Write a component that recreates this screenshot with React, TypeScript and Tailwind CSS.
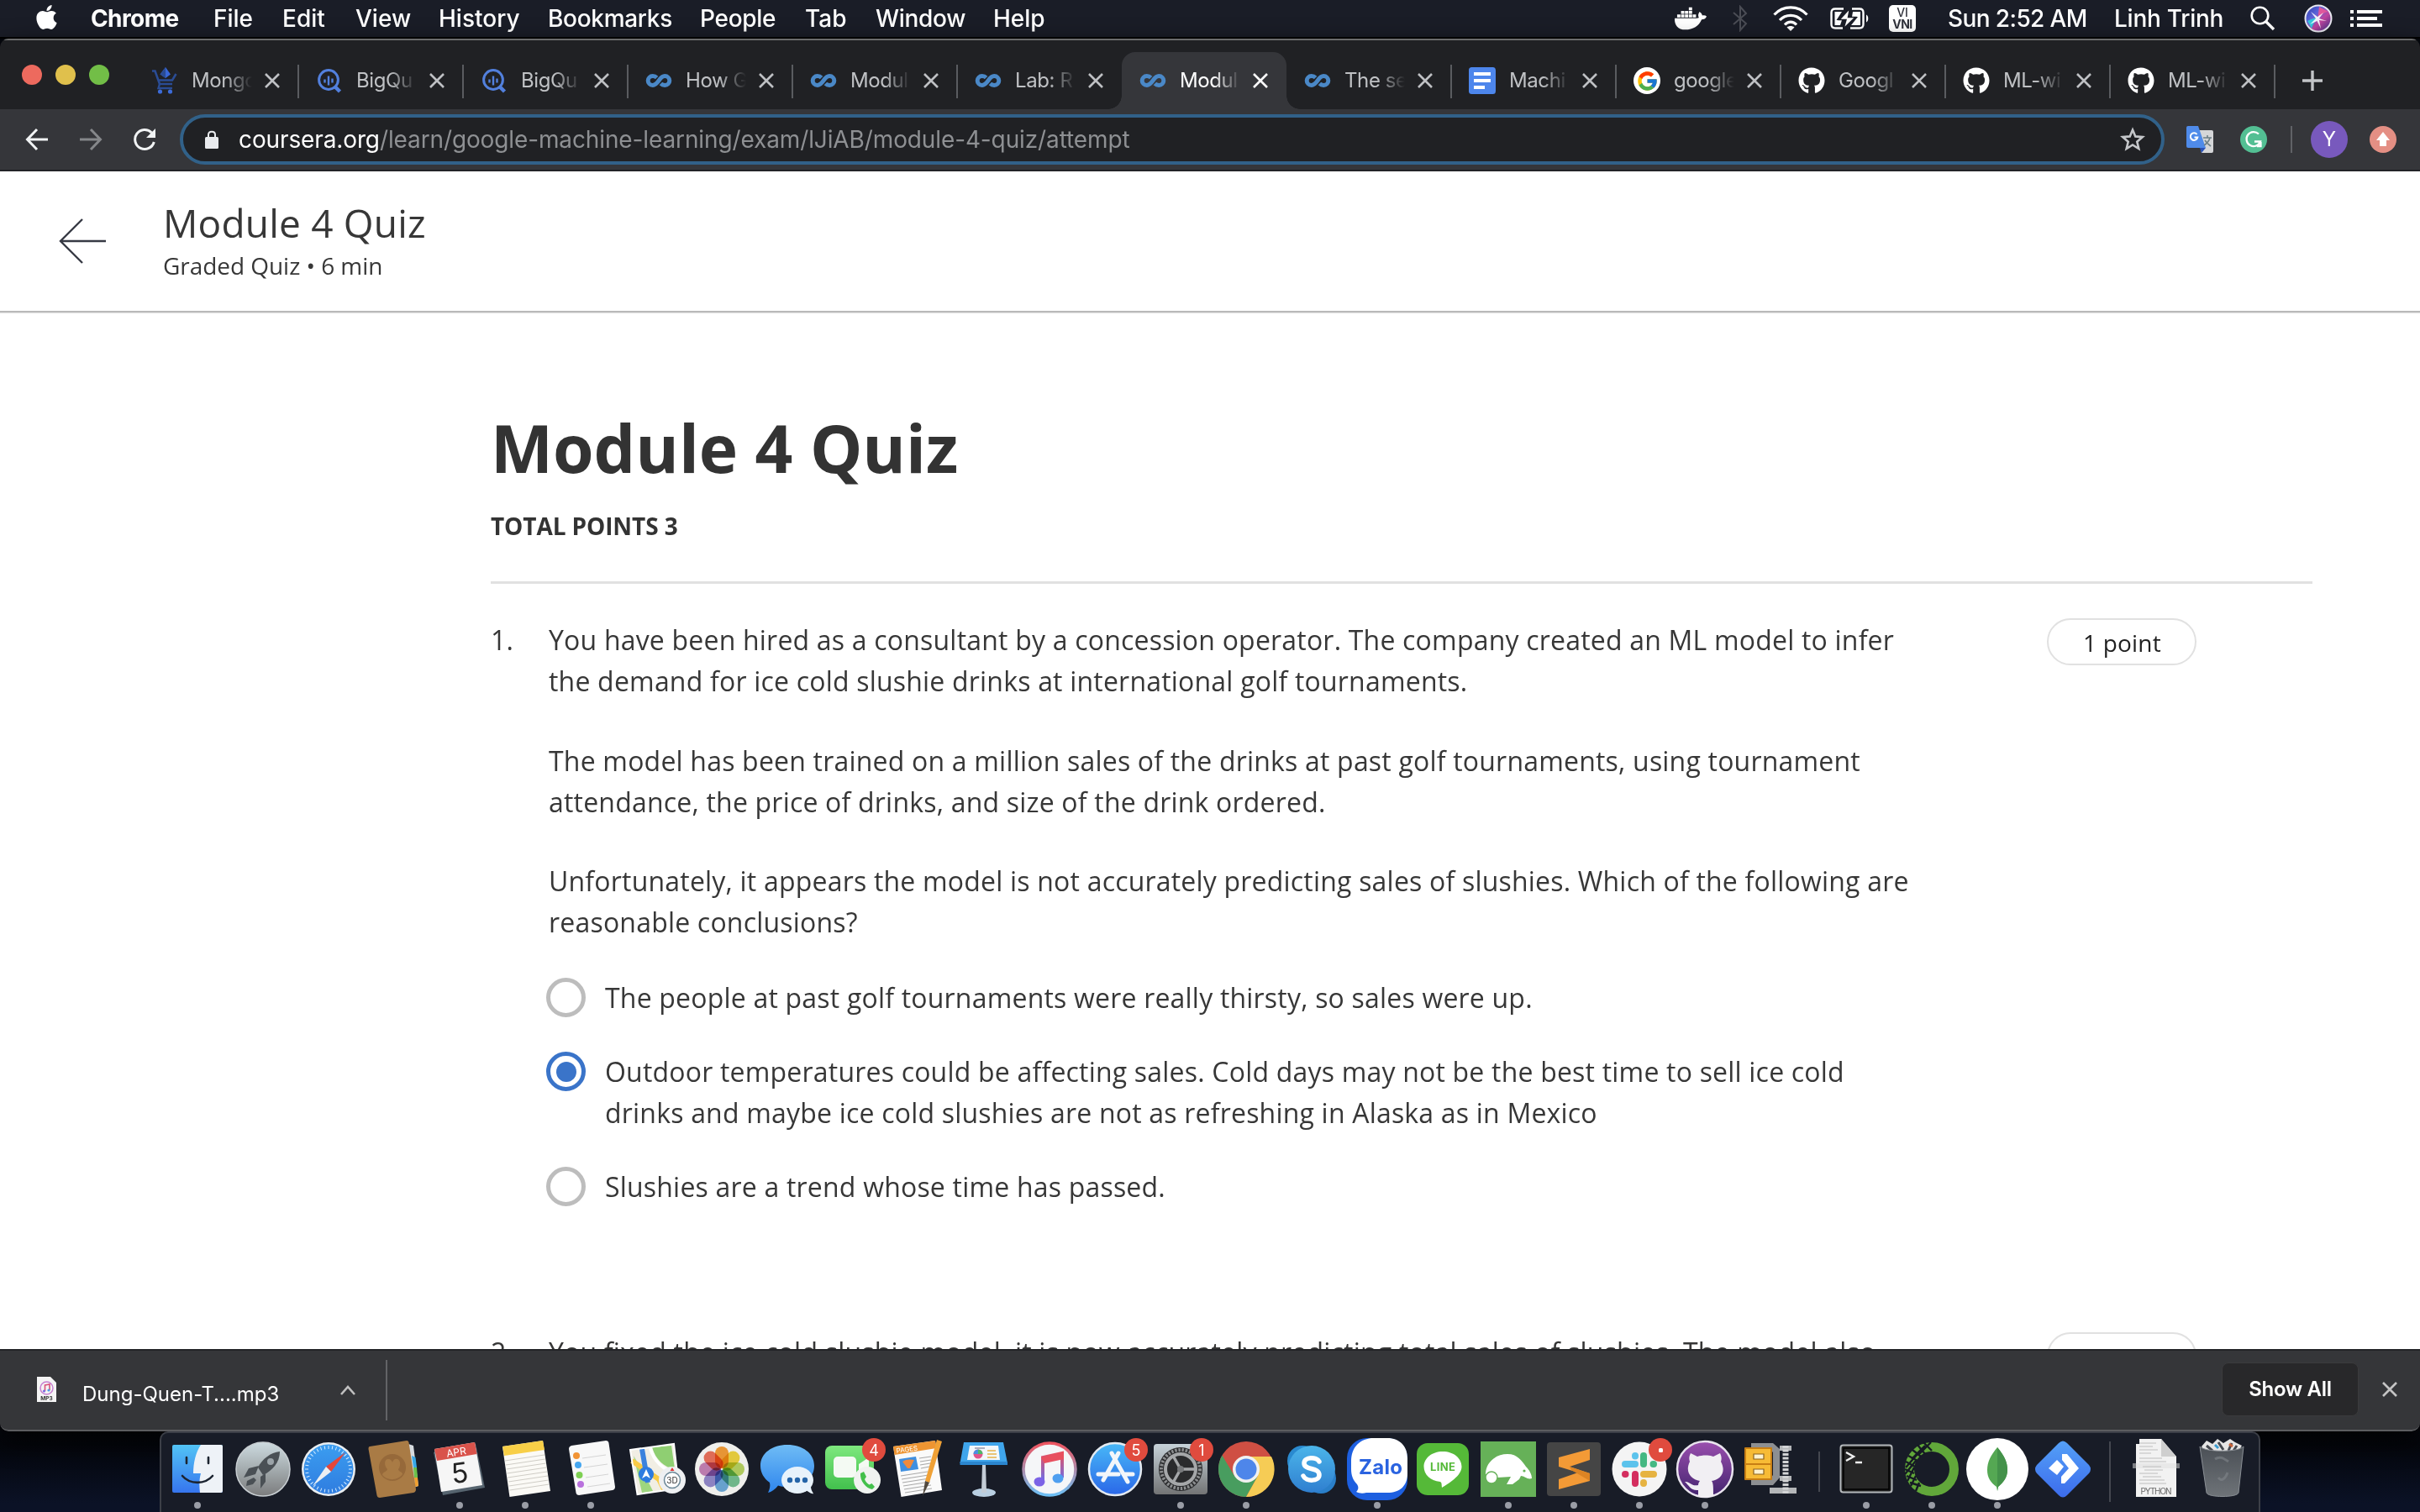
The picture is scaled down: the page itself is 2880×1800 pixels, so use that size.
import React from "react";
import { FaApple, FaDocker, FaGithub } from "react-icons/fa";
import { FcGoogle } from "react-icons/fc";

const sans = "font-['Inter','Liberation_Sans',sans-serif]";

function Coursera() {
  return (
    <svg viewBox="0 0 32 32" className="h-8 w-8" fill="none">
      <path
        d="M13.600 12.400C12.200 11 10.600 10.600 8.800 10.600C5.600 10.600 3.200 13 3.200 16S5.600 21.400 8.800 21.400C15.500 21.400 16.500 10.600 23.200 10.600C26.400 10.600 28.800 13 28.800 16S26.400 21.400 23.200 21.400C21.400 21.400 19.800 21 18.400 19.600"
        stroke="#4a88c7"
        strokeWidth="5"
      />
    </svg>
  );
}

function Cart() {
  return (
    <svg viewBox="0 0 32 32" className="h-8 w-8" fill="none">
      <path d="M1 4.5H4.5L10 20H25M9 15.5H25L29.5 8" stroke="#2a4c94" strokeWidth="2.6" />
      <path d="M10 20L8.5 25H25" stroke="#2a4c94" strokeWidth="2.4" />
      <path d="M17 0L23 8.5L17 13L10.500 8.500Z" fill="#3867d6" />
      <path d="M17 0V13L10.500 8.500Z" fill="#2a4c94" />
      <circle cx="10.500" cy="29" r="2.600" fill="#3c6bd8" />
      <circle cx="22.500" cy="29" r="2.600" fill="#3c6bd8" />
    </svg>
  );
}

function BigQuery() {
  return (
    <svg viewBox="0 0 32 32" className="h-8 w-8" fill="none">
      <circle cx="15" cy="15" r="11.400" stroke="#5280dd" strokeWidth="3" />
      <path d="M23 23.500L28.500 29" stroke="#5280dd" strokeWidth="4.500" />
      <path d="M10.500 14.500V18.500M15 10.500V21.500M19.500 13.500V18.500" stroke="#5280dd" strokeWidth="2.400" />
    </svg>
  );
}

function Docs() {
  return (
    <svg viewBox="0 0 32 32" className="h-8 w-8">
      <rect width="32" height="32" rx="3.500" fill="#4d86ec" />
      <path d="M6 6h20v4H6zM6 14h20v4H6zM6 22h13v4H6z" fill="#fff" />
    </svg>
  );
}

function GoogleIcon() {
  return (
    <span className="flex h-8 w-8 items-center justify-center rounded-full bg-white">
      <FcGoogle className="h-[27px] w-[27px]" />
    </span>
  );
}

const gh = <FaGithub className="h-8 w-8 text-white" />;

const tabs: { icon: React.ReactNode; title: string; active?: boolean; sep: boolean }[] = [
  { icon: <Cart />, title: "Mongo", sep: true },
  { icon: <BigQuery />, title: "BigQu", sep: true },
  { icon: <BigQuery />, title: "BigQu", sep: true },
  { icon: <Coursera />, title: "How G", sep: true },
  { icon: <Coursera />, title: "Modul", sep: true },
  { icon: <Coursera />, title: "Lab: R", sep: false },
  { icon: <Coursera />, title: "Modul", active: true, sep: false },
  { icon: <Coursera />, title: "The se", sep: true },
  { icon: <Docs />, title: "Machi", sep: true },
  { icon: <GoogleIcon />, title: "google", sep: true },
  { icon: gh, title: "Googl", sep: true },
  { icon: gh, title: "ML-wi", sep: true },
  { icon: gh, title: "ML-wi", sep: true },
];

const menus = [
  { t: "File", w: "w-[82px] tracking-[0px]" },
  { t: "Edit", w: "w-[87px]" },
  { t: "View", w: "w-[99px]" },
  { t: "History", w: "w-[130px]" },
  { t: "Bookmarks", w: "w-[181px] tracking-[-0.3px]" },
  { t: "People", w: "w-[125px] tracking-[-0.3px]" },
  { t: "Tab", w: "w-[84px]" },
  { t: "Window", w: "w-[140px] tracking-[-0.3px]" },
  { t: "Help", w: "w-[80px]" },
];

function MenuBar() {
  return (
    <div className={`${sans} flex h-[46px] shrink-0 items-center border-b-2 border-black bg-[#1a1d27] text-[28px] leading-[44px] font-medium text-white`}>
      <FaApple className="ml-[41px] h-[33px] w-[29px] -translate-y-[2px]" />
      <div className="ml-[38px] w-[146px] font-bold tracking-[-0.6px]">Chrome</div>
      {menus.map((m) => (
        <div key={m.t} className={`${m.w} whitespace-nowrap`}>{m.t}</div>
      ))}
      <FaDocker className="ml-[731px] h-[38px] w-[38px]" />
      <svg viewBox="0 0 20 32" className="ml-[30px] h-8 w-5" fill="none" stroke="#4b4d55" strokeWidth="2">
        <path d="M2 9L17 22L10 30V2L17 10L2 23" />
      </svg>
      <svg viewBox="0 0 42 30" className="ml-[29px] h-[30px] w-[42px]" fill="none" stroke="#fff" strokeWidth="3.200">
        <path d="M1.500 10.500C12 -1 30 -1 40.500 10.500M8 17C15 9.500 27 9.500 34 17M14 22.500C18 18 24 18 28 22.500" />
        <path d="M16.500 25.500L21 30L25.500 25.500C23 23.500 19 23.500 16.500 25.500Z" fill="#fff" stroke="none" />
      </svg>
      <svg viewBox="0 0 46 26" className="ml-[26px] h-[26px] w-[46px]" fill="none" stroke="#fff" strokeWidth="2.400">
        <path d="M16 1.500H6C3 1.500 1.500 3 1.500 6V20C1.500 23 3 24.500 6 24.500H15M26 1.500H35C38 1.500 39.500 3 39.500 6V20C39.500 23 38 24.500 35 24.500H24" />
        <path d="M43 8.500C46 10 46 16 43 17.500Z" fill="#fff" stroke="none" />
        <path d="M14 5H5.500V21H12L14 15H7.500ZM27 5H36V21H25L33 11H26Z" fill="#fff" stroke="none" />
        <path d="M23.500 1L11 14.500H19L16 25L30 11.500H21.500Z" fill="#fff" stroke="#1a1d27" strokeWidth="1.500" />
      </svg>
      <div className="ml-[24px] flex h-8 w-8 flex-col items-center justify-center rounded-[5px] bg-white text-[14px] leading-[14px] text-[#30323b]">
        <span>VI</span>
        <span className="font-bold tracking-[-0.5px]">VNI</span>
      </div>
      <div className="ml-[38px] w-[198px] tracking-[-0.6px] whitespace-nowrap">Sun 2:52 AM</div>
      <div className="w-[162px] tracking-[-0.25px] whitespace-nowrap">Linh Trinh</div>
      <svg viewBox="0 0 30 30" className="h-[30px] w-[30px]" fill="none" stroke="#fff" strokeWidth="2.600">
        <circle cx="11.500" cy="11.500" r="9.800" />
        <path d="M18.500 18.500L28 28" strokeWidth="3.400" />
      </svg>
      <svg viewBox="0 0 34 34" className="ml-[34px] h-[34px] w-[34px]">
        <defs>
          <linearGradient id="siri" x1="0" y1="0" x2="1" y2="1">
            <stop offset="0" stopColor="#2a3aa8" />
            <stop offset=".35" stopColor="#5a64d8" />
            <stop offset=".6" stopColor="#c0449c" />
            <stop offset="1" stopColor="#2b2f86" />
          </linearGradient>
        </defs>
        <circle cx="17" cy="17" r="15.500" fill="url(#siri)" stroke="#e8e8f0" strokeWidth="2" />
        <path d="M4 20C10 17 13 16 16 16C13 20 10 25 9 29Z" fill="#35c7dd" />
        <path d="M18 3C17 9 17 13 17 16C21 12 25 9 29 9Z" fill="#e0579c" />
        <path d="M8 9L16 15L23 10L18 17L27 20L18 19L20 29L15.500 20L7 24L14 17Z" fill="#fff" opacity=".9" />
      </svg>
      <svg viewBox="0 0 38 20" className="ml-[21px] h-5 w-[38px]" fill="#fff">
        <path d="M0 0h4v4H0zM8 0h30v4H8zM0 8h4v4H0zM8 8h24v4H8zM0 16h4v4H0zM8 16h30v4H8z" />
      </svg>
    </div>
  );
}

function Close({ className }: { className: string }) {
  return (
    <svg viewBox="0 0 20 20" className={className} fill="none" stroke="currentColor" strokeWidth="2.600">
      <path d="M2 2L18 18M18 2L2 18" />
    </svg>
  );
}

function TabStrip() {
  return (
    <div className="flex h-[82px] items-end pl-[26px]">
      <div className="mr-[29px] mb-[29px] flex gap-4">
        <span className="h-6 w-6 rounded-full bg-[#ed6a5e]" />
        <span className="h-6 w-6 rounded-full bg-[#e0c04c]" />
        <span className="h-6 w-6 rounded-full bg-[#72be47]" />
      </div>
      {tabs.map((t, i) => (
        <div
          key={i}
          className={
            t.active
              ? "relative flex h-[68px] w-[196px] items-center rounded-t-[16px] bg-[#35363a] pl-[21px] text-white"
              : "relative flex h-[68px] w-[196px] items-center pl-[21px] text-[#bfc1c4]"
          }
        >
          {t.active && (
            <>
              <span className="absolute bottom-0 -left-4 h-4 w-4 bg-[radial-gradient(circle_at_0_0,transparent_15.5px,#35363a_16px)]" />
              <span className="absolute -right-4 bottom-0 h-4 w-4 bg-[radial-gradient(circle_at_100%_0,transparent_15.5px,#35363a_16px)]" />
            </>
          )}
          {t.icon}
          <span className="ml-4 w-[72px] overflow-hidden text-[24px] leading-8 tracking-[-0.4px] whitespace-nowrap [mask-image:linear-gradient(to_right,#000_40px,transparent_72px)]">
            {t.title}
          </span>
          <Close className="ml-[14px] h-5 w-5" />
          {t.sep && <span className="absolute top-[15px] right-[-1px] h-10 w-[2px] bg-[#5a5c60]" />}
        </div>
      ))}
      <svg viewBox="0 0 26 26" className="mb-[21px] ml-[32px] h-[26px] w-[26px]" stroke="#c3c5c8" strokeWidth="3.400">
        <path d="M13 1V25M1 13H25" />
      </svg>
    </div>
  );
}

function Toolbar() {
  return (
    <div className="flex h-[74px] items-center border-b-2 border-[#222327] bg-[#35363a] pl-[30px]">
      <svg viewBox="0 0 28 28" className="h-7 w-7" fill="none" stroke="#f1f3f4" strokeWidth="3">
        <path d="M14 2L2.500 14L14 26M2.500 14H27" />
      </svg>
      <svg viewBox="0 0 28 28" className="ml-[36px] h-7 w-7" fill="none" stroke="#85878a" strokeWidth="3">
        <path d="M14 2L25.500 14L14 26M25.500 14H1" />
      </svg>
      <svg viewBox="0 0 28 28" className="ml-[36px] h-7 w-7" fill="none" stroke="#f1f3f4" strokeWidth="3">
        <path d="M22.500 6A11.500 11.500 0 1 0 25.300 17" />
        <path d="M27 1V12H16Z" fill="#f1f3f4" stroke="none" />
      </svg>
      <div className="ml-[28px] flex h-[60px] w-[2362px] items-center rounded-full border-4 border-[#316189] bg-[#202124] pl-[26px]">
        <svg viewBox="0 0 16 22" className="h-[22px] w-4">
          <rect y="8" width="16" height="14" rx="1.500" fill="#e8eaed" />
          <path d="M4 9V5.500C4 0.500 12 0.500 12 5.500V9" fill="none" stroke="#e8eaed" strokeWidth="2" />
        </svg>
        <div className="ml-6 text-[28px] leading-10 tracking-[-0.12px] whitespace-nowrap text-[#8e9093]">
          <span className="text-white">coursera.org</span>/learn/google-machine-learning/exam/lJiAB/module-4-quiz/attempt
        </div>
        <svg viewBox="0 0 30 30" className="mr-[19px] ml-auto h-[30px] w-[30px]" fill="none" stroke="#c4c6c9" strokeWidth="2.600">
          <path d="M15 3.500L18.300 11.400L26.800 12.100L20.300 17.700L22.300 26L15 21.500L7.700 26L9.700 17.700L3.200 12.100L11.700 11.400Z" />
        </svg>
      </div>
      <svg viewBox="0 0 32 32" className="ml-[26px] h-8 w-8">
        <path d="M12 5H30Q32 5 32 7V30Q32 32 30 32H18Z" fill="#d5d6d8" />
        <path d="M16 26H23L18 32Z" fill="#2a52b8" />
        <path d="M2 0H14L23 26H2Q0 26 0 24V2Q0 0 2 0Z" fill="#4f8bea" />
        <path d="M20 14H30M25 11V14M28 14C27 18 24 21 21 23M22 17C24 20 26 22 29 24" stroke="#6d7f86" strokeWidth="1.600" fill="none" />
        <path d="M12.500 10A4.300 4.300 0 1 0 13.300 13.500H9.500" fill="none" stroke="#fff" strokeWidth="2" />
      </svg>
      <svg viewBox="0 0 32 32" className="ml-8 h-8 w-8">
        <circle cx="16" cy="16" r="16" fill="#53bf93" />
        <path d="M22 9.500A8.500 8.500 0 1 0 24 18.500H17M20 24H24.500V19" fill="none" stroke="#fff" strokeWidth="2.300" />
      </svg>
      <span className="ml-[28px] h-8 w-[2px] bg-[#606266]" />
      <span className="ml-[22px] flex h-11 w-11 items-center justify-center rounded-full bg-[#7859bd] text-[24px] text-white">Y</span>
      <svg viewBox="0 0 32 32" className="ml-[26px] h-8 w-8">
        <circle cx="16" cy="16" r="16" fill="#e48f84" />
        <path d="M16 7L24 17H20V24H12V17H8Z" fill="#fff" />
      </svg>
    </div>
  );
}

function Radio({ on }: { on?: boolean }) {
  return on ? (
    <span className="mt-px flex h-[47px] w-[47px] shrink-0 items-center justify-center rounded-full border-[5px] border-[#3a74c9]">
      <span className="h-6 w-6 rounded-full bg-[#3a74c9]" />
    </span>
  ) : (
    <span className="mt-px h-[47px] w-[47px] shrink-0 rounded-full border-[5px] border-[#bdbdbd]" />
  );
}

function Points() {
  return (
    <div className="flex h-[56px] w-[178px] items-center justify-center rounded-full border-2 border-[#e1e1e1] pt-[3px] pl-px text-[28px] text-[#1f1f1f]">
      1 point
    </div>
  );
}

function Page() {
  return (
    <div className="flex h-[1402px] flex-col overflow-hidden bg-white font-['Open_Sans','Noto_Sans',sans-serif] text-[#373737]">
      <header className="flex h-[168px] shrink-0 border-b-[2px] border-[#b9b9b9] shadow-[0_1px_1px_#e4e4e4]">
        <svg viewBox="0 0 56 54" className="mt-[56px] ml-[70px] h-[54px] w-14" fill="none" stroke="#373a44" strokeWidth="2.400">
          <path d="M28 1L2 27L28 53M2 27H56" />
        </svg>
        <div className="ml-[68px]">
          <div className="mt-[29px] text-[46px] leading-[64px] tracking-[0.2px]">Module 4 Quiz</div>
          <div className="text-[28px] leading-[38px] tracking-[-0.05px]">Graded Quiz • 6 min</div>
        </div>
      </header>
      <main className="ml-[584px] w-[2168px]">
        <h1 className="mt-[106px] text-[78.5px] leading-[110px] font-bold text-[#333]">Module 4 Quiz</h1>
        <div className="mt-[20px] text-[28px] leading-9 font-bold tracking-[-0.1px] text-[#333]">TOTAL POINTS 3</div>
        <div className="mt-[48px] h-[3px] bg-[#e1e1e1]" />
        <section className="mt-[41px] flex h-[850px] text-[32px] leading-[49px] tracking-[0.2px]">
          <div className="w-[69px] pt-px">1.</div>
          <div className="w-[1783px] pt-px">
            <p className="whitespace-nowrap">
              You have been hired as a consultant by a concession operator. The company created an ML model to infer
              <br />
              the demand for ice cold slushie drinks at international golf tournaments.
            </p>
            <p className="mt-[46px] whitespace-nowrap">
              The model has been trained on a million sales of the drinks at past golf tournaments, using tournament
              <br />
              attendance, the price of drinks, and size of the drink ordered.
            </p>
            <p className="mt-[45px] whitespace-nowrap">
              Unfortunately, it appears the model is not accurately predicting sales of slushies. Which of the following are
              <br />
              reasonable conclusions?
            </p>
            <div className="mt-[41px] -ml-[3px] flex flex-col gap-[39px]">
              <div className="flex gap-[23px]">
                <Radio />
                <p>The people at past golf tournaments were really thirsty, so sales were up.</p>
              </div>
              <div className="flex gap-[23px]">
                <Radio on />
                <p className="whitespace-nowrap">
                  Outdoor temperatures could be affecting sales. Cold days may not be the best time to sell ice cold
                  <br />
                  drinks and maybe ice cold slushies are not as refreshing in Alaska as in Mexico
                </p>
              </div>
              <div className="flex gap-[23px]">
                <Radio />
                <p>Slushies are a trend whose time has passed.</p>
              </div>
            </div>
          </div>
          <Points />
        </section>
        <section className="flex text-[32px] leading-[48px] tracking-[0.2px]">
          <div className="w-[69px]">2.</div>
          <div className="w-[1783px] whitespace-nowrap">
            You fixed the ice cold slushie model, it is now accurately predicting total sales of slushies. The model also
          </div>
          <Points />
        </section>
      </main>
    </div>
  );
}

function Downloads() {
  return (
    <div className="flex h-[98px] items-center rounded-b-[10px] border-t-2 border-b-2 border-t-[#232427] border-b-[#5c5d60] bg-[#353639] pl-[44px] text-white">
      <svg viewBox="0 0 24 30" className="mb-[2px] h-[30px] w-6">
        <path d="M0 0H16L23 7V30H0Z" fill="#f4f4f4" />
        <circle cx="11.500" cy="13.500" r="7.500" fill="none" stroke="#c77fd0" strokeWidth="1.500" />
        <path d="M9.500 17V10L15 9V16" fill="none" stroke="#d8527c" strokeWidth="1.600" />
        <circle cx="8.500" cy="17" r="1.600" fill="#7b6be0" />
        <circle cx="14" cy="16" r="1.600" fill="#4e9be8" />
        <text x="11.500" y="27.500" textAnchor="middle" fontSize="6.500" fontWeight="700" fill="#333" fontFamily="Inter">MP3</text>
      </svg>
      <div className="mt-[10px] ml-[30px] w-[307px] text-[24px] leading-8 whitespace-nowrap">Dung-Quen-T....mp3</div>
      <svg viewBox="0 0 18 12" className="h-3 w-[18px]" fill="none" stroke="#c0c0c0" strokeWidth="2.600">
        <path d="M1 11L9 2L17 11" />
      </svg>
      <span className="ml-[36px] h-[72px] w-[2px] bg-[#636467]" />
      <div className="mb-[2px] ml-auto flex h-[64px] w-[163px] items-center justify-center rounded-lg border border-[#3b3b3d] bg-[#28282a] text-[24px] font-semibold tracking-[-0.3px]">
        Show All
      </div>
      <Close className="mr-[26px] mb-[2px] ml-[27px] h-5 w-5 text-[#c4c4c4]" />
    </div>
  );
}

function Badge({ n }: { n: string }) {
  return (
    <g>
      <circle cx="64" cy="17" r="14" fill="#e04b3e" />
      {n === "•" ? (
        <rect x="62" y="15" width="5" height="5" rx="1.500" fill="#fff" />
      ) : (
        <text x="64" y="23.500" textAnchor="middle" fontSize="18" fill="#fff" fontFamily="Inter">{n}</text>
      )}
    </g>
  );
}

const ticks = Array.from({ length: 36 }, (_, i) => i * 10);
const petals = ["#f79a2e", "#f2d438", "#b6d45a", "#6fbf8f", "#67a8dd", "#8f86cf", "#c57db8", "#ee6b55"];

const icons: Record<string, React.ReactNode> = {
  finder: (
    <>
      <rect x="9" y="11" width="60" height="57" rx="2" fill="url(#gFinder)" />
      <path d="M43 11H67Q69 11 69 13V66Q69 68 67 68H42C41 60 41 52 43 45H34C34 32 37 20 43 11Z" fill="#eef2f7" />
      <path d="M26 26V33M52 26V33" stroke="#1c2430" strokeWidth="2.600" strokeLinecap="round" />
      <path d="M21 48C30 58.500 48 58.500 57 48" fill="none" stroke="#1c2430" strokeWidth="2.600" strokeLinecap="round" />
    </>
  ),
  launchpad: (
    <>
      <circle cx="39" cy="40" r="32" fill="url(#gSilver)" stroke="#c8ced2" strokeWidth="1.500" />
      <path d="M59 19C48 20 38 28 33 38L39 47C50 42 59 32 59 19Z" fill="#4a5055" />
      <path d="M34 36L22 39L16 50L30 46ZM42 45L42 55L36 63L36 49Z" fill="#4a5055" />
      <path d="M28 50L20 54L19 60L27 58L31 53Z" fill="#4a5055" />
      <circle cx="48" cy="31" r="4" fill="#9ba3a8" />
    </>
  ),
  safari: (
    <>
      <circle cx="39" cy="40" r="32" fill="#e9edf0" />
      <circle cx="39" cy="40" r="29.500" fill="url(#gSafari)" />
      {ticks.map((a) => (
        <path key={a} d="M39 12V16" stroke="#d5ecff" strokeWidth="1" transform={`rotate(${a} 39 40)`} />
      ))}
      <path d="M59 20L36 37L42 43Z" fill="#e5463a" />
      <path d="M20 60L36 37L42 43Z" fill="#eceff2" />
    </>
  ),
  contacts: (
    <>
      <path d="M56 10L62 12L68 60L62 62Z" fill="#d7dbe0" />
      <path d="M60 24L64.500 26L66 38L62 38Z" fill="#39a9e8" />
      <path d="M62 38L66 38L67 50L63 50Z" fill="#6cc04a" />
      <path d="M63 50L67 50L68 60L64 61Z" fill="#f0a030" />
      <path d="M10 13L54 6Q56 6 56.500 8L65 64Q65 67 62 68L22 74Q19 74 18.500 71L8.500 16Q8.500 13 10 13Z" fill="#a97b45" />
      <circle cx="37" cy="38" r="16" fill="#96693a" />
      <path d="M25 47C25 43 31 43 31 40C27 36 27 28 32 28C35 28 36 30 37 32C38 29 40 27 43 28C47 29 47 37 44 40C44 43 49 43 49 46C43 54 31 54 25 47Z" fill="#a97b45" />
    </>
  ),
  calendar: (
    <>
      <path d="M8 20L58 10L69 62L19 71Z" fill="#56646f" />
      <path d="M9 16L57 8L66 59L17 67Z" fill="#f6f6f6" />
      <path d="M9 16L57 8L59.500 22L12 30Z" fill="#d9534b" />
      <text x="35" y="24" textAnchor="middle" fontSize="12" fill="#fff" fontFamily="Inter" transform="rotate(-9 35 20)">APR</text>
      <text x="39" y="56" textAnchor="middle" fontSize="33" fill="#222" fontFamily="Inter" transform="rotate(-7 39 45)">5</text>
    </>
  ),
  notes: (
    <>
      <path d="M12 13L60 6L69 66L20.500 73Z" fill="#fbfaf6" />
      <path d="M12 13L60 6L62 17L14 24Z" fill="#f8cf47" />
      {[0, 1, 2, 3, 4, 5, 6, 7].map((i) => (
        <path key={i} d={`M${15 + i * 0.8} ${30 + i * 5}L${62 + i * 0.8} ${23 + i * 5}`} stroke="#cfcdc6" strokeWidth="1" />
      ))}
    </>
  ),
  reminders: (
    <>
      <path d="M16 12L57 6Q60 6 60.500 9L68 61Q68 64 65 65L25 71Q22 71 21.500 68L13 16Q13 13 16 12Z" fill="#f8f8f8" />
      <circle cx="22" cy="24" r="4" fill="#f29434" />
      <circle cx="24" cy="35" r="4" fill="#45a6f0" />
      <circle cx="25.500" cy="47" r="4" fill="#7ed053" />
      <circle cx="27" cy="58" r="4" fill="#b971dd" />
      <path d="M29 27L57 23M31 38L59 34M33 50L60 46M35 61L62 57" stroke="#d5d5d5" strokeWidth="1.200" />
    </>
  ),
  maps: (
    <>
      <path d="M8 17L60 10L66 63L16.500 70Z" fill="#f1eee4" />
      <path d="M34 14L57 12L61 40C48 38 38 28 34 14Z" fill="#8fcf72" />
      <path d="M12 24L22 68L35 66L26 48Z" fill="#9ed67f" />
      <path d="M10 30L42 52L48 64" fill="none" stroke="#f9cb46" strokeWidth="6" />
      <path d="M22 16L29 56" stroke="#3b82dd" strokeWidth="6" />
      <path d="M32 15C36 30 48 42 62 44" fill="none" stroke="#fff" strokeWidth="4" />
      <path d="M8 17L60 10L66 63L16.500 70Z" fill="none" stroke="#fff" strokeWidth="2" />
      <circle cx="27" cy="46" r="9" fill="#2d7be0" />
      <path d="M27 40L32 51L27 48L22 51Z" fill="#fff" />
      <circle cx="58" cy="53" r="16" fill="#eef0f2" />
      <circle cx="58" cy="53" r="9.500" fill="#fff" stroke="#6b8797" strokeWidth="1.500" />
      <path d="M58 38L60.500 42H55.500Z" fill="#d33" />
      <text x="58" y="57" textAnchor="middle" fontSize="10" fill="#333" fontFamily="Inter">3D</text>
    </>
  ),
  photos: (
    <>
      <circle cx="39" cy="40" r="32" fill="#efefec" />
      {petals.map((c, i) => (
        <rect key={c} x="31" y="13" width="16" height="26" rx="8" fill={c} className="mix-blend-multiply" opacity=".95" transform={`rotate(${i * 45} 39 40)`} />
      ))}
    </>
  ),
  messages: (
    <>
      <path d="M39 11C57 11 71 21 71 36S57 61 39 61C35 61 31 60.500 28 59.500C25 64 20 67 16 68C18 64 19 60 18 56C11 51 7 44 7 36C7 21 21 11 39 11Z" fill="url(#gBlue)" />
      <ellipse cx="51" cy="53" rx="19" ry="16" fill="#e8f2fb" />
      <path d="M60 64C64 67 68 70 70 69C68 66 67 63 67 61Z" fill="#e8f2fb" />
      <circle cx="42" cy="53" r="3.200" fill="#2564a8" />
      <circle cx="51" cy="53" r="3.200" fill="#2564a8" />
      <circle cx="60" cy="53" r="3.200" fill="#2564a8" />
    </>
  ),
  facetime: (
    <>
      <rect x="6" y="12" width="58" height="52" rx="8" fill="url(#gGreen)" />
      <rect x="16" y="25" width="27" height="25" rx="5" fill="#f4faf3" />
      <path d="M46 34L58 26V48L46 42Z" fill="#f4faf3" />
      <circle cx="56" cy="53" r="16" fill="#f0f3f0" />
      <path d="M48 45L52 43L55 49L53 52C54 55 56 57 58.500 58.500L61.500 57L65 61L62 64C55 63 47 54 48 45Z" fill="#43c04b" />
      <Badge n="4" />
    </>
  ),
  pages: (
    <>
      <path d="M9 13L59 6L67 65L18.500 73Z" fill="#fafafa" />
      <path d="M9 13L59 6L60.500 15L10.500 23Z" fill="#ee9532" />
      <text x="13" y="21" fontSize="8" fill="#fff" fontFamily="Inter" transform="rotate(-8 13 21)">PAGES</text>
      <path d="M16 28L36 25L39 40L18 43Z" fill="#3f8fe0" />
      <path d="M20 31C24 28 29 28 34 29L29 39H26Z" fill="#f08a3c" />
      {[0, 1, 2, 3, 4, 5].map((i) => (
        <path key={i} d={`M${18 + i} ${48 + i * 4}L${50 + i} ${43 + i * 4}`} stroke="#a9a9a9" strokeWidth="1.200" />
      ))}
      <path d="M40 27L54 25M41 31L54 29M41 35L53 33M42 39L52 37" stroke="#a9a9a9" strokeWidth="1.200" />
      <path d="M61 5L67 7L52 56L47 54Z" fill="#f0a136" />
      <path d="M52 56L47 54L44 72Z" fill="#51483e" />
    </>
  ),
  keynote: (
    <>
      <ellipse cx="39" cy="68" rx="14" ry="5" fill="#b9cfe2" />
      <path d="M37 34H41L42 68H36Z" fill="#c3ccd6" />
      <path d="M15 8H62L67 33H10.500Z" fill="#3fa5ec" />
      <path d="M10.500 31H67V35H10.500Z" fill="#2b86cf" />
      <path d="M22 12H56L58 29H19Z" fill="#f3f8fc" />
      <path d="M28 15H40" stroke="#99a" strokeWidth="1.500" />
      <circle cx="32" cy="22" r="5.500" fill="#e0558c" />
      <path d="M32 22V16.500A5.500 5.500 0 0 1 37.500 22Z" fill="#4fb86a" />
      <path d="M32 22H26.500A5.500 5.500 0 0 1 32 16.500Z" fill="#4a90e2" />
      <path d="M43 18H53M43 22H54M43 26H54" stroke="#e8b24a" strokeWidth="1.500" />
    </>
  ),
  itunes: (
    <>
      <circle cx="39" cy="40" r="31" fill="#f5f6f8" stroke="url(#gTunes)" strokeWidth="3.500" />
      <path d="M31 54V26L54 21V50" fill="none" stroke="url(#gNote)" strokeWidth="4" />
      <path d="M29 26L56 20V28L33 33Z" fill="#e8505f" />
      <ellipse cx="27" cy="55" rx="6.500" ry="5.500" fill="#7c63e6" />
      <ellipse cx="49" cy="51" rx="6.500" ry="5.500" fill="#4f9ff0" />
    </>
  ),
  appstore: (
    <>
      <circle cx="39" cy="40" r="31" fill="url(#gBlue2)" stroke="#e4eaf0" strokeWidth="2.500" />
      <path d="M43 21L25 53M35 21L54 55M19 46H43M50 46H60" stroke="#f2f6fa" strokeWidth="5" strokeLinecap="round" />
      <Badge n="5" />
    </>
  ),
  prefs: (
    <>
      <rect x="7" y="10" width="64" height="60" rx="4" fill="url(#gPrefs)" />
      <circle cx="39" cy="40" r="26" fill="#2a2b2d" />
      <circle cx="39" cy="40" r="23" fill="none" stroke="#8b8d8f" strokeWidth="4" strokeDasharray="2.500 1.700" />
      <circle cx="39" cy="40" r="18" fill="none" stroke="#a5a7a9" strokeWidth="4" />
      <path d="M39 40L57 40M39 40L30 56M39 40L30 24" stroke="#a5a7a9" strokeWidth="3.500" />
      <circle cx="39" cy="40" r="4" fill="#77797b" />
      <Badge n="1" />
    </>
  ),
  chrome: (
    <>
      <circle cx="39" cy="40" r="33" fill="#cf4f43" />
      <path d="M10.400 23.500A33 33 0 0 0 39 73L53 48L39 55L25 48Z" fill="#489d5f" />
      <path d="M39 73A33 33 0 0 0 69 25H39L53 48Z" fill="#f6cc55" />
      <circle cx="39" cy="40" r="16" fill="#f1f1f1" />
      <circle cx="39" cy="40" r="12.500" fill="#4e86ea" />
    </>
  ),
  skype: (
    <>
      <circle cx="28" cy="30" r="18" fill="#2a8ad0" />
      <circle cx="50" cy="51" r="18" fill="#2a7fc9" />
      <circle cx="39" cy="40" r="28" fill="url(#gSkype)" />
      <path d="M48 31C45 25 30 25 30 33C30 42 48 37 48 47C48 55 32 55 29 48" fill="none" stroke="#fff" strokeWidth="5.500" strokeLinecap="round" />
    </>
  ),
  zalo: (
    <>
      <rect x="3" y="3" width="72" height="74" rx="24" fill="#1d5fe0" />
      <path d="M32 3H51C66 3 75 13 75 27V45C75 60 66 68 51 68H26C22 69 18 69 14 67C17 64 17 61 15 58C10 53 8 47 8 40V30C8 16 16 5 32 3Z" fill="#fff" />
      <text x="43" y="46" textAnchor="middle" fontSize="24" fontWeight="700" fill="#2a63e0" fontFamily="Inter" textLength="52">Zalo</text>
    </>
  ),
  line: (
    <>
      <rect x="8" y="9" width="62" height="62" rx="13" fill="#55b938" />
      <path d="M39 19C52 19 61.500 27 61.500 37C61.500 48 46 57 38 62C37.500 58 38 56 36 55C24 54 16.500 46 16.500 37C16.500 27 26 19 39 19Z" fill="#fff" />
      <text x="39" y="42" textAnchor="middle" fontSize="13" fontWeight="700" fill="#55b938" fontFamily="Inter" textLength="30">LINE</text>
    </>
  ),
  bear: (
    <>
      <rect x="6" y="7" width="66" height="66" fill="#66b158" />
      <path d="M12 46C12 32 24 22 38 22C50 22 55 30 60 37C64 41 67 46 67 51C62 53 58 48 54 48L52 52L44 58L37 58L42 49L26 50Z" fill="#fff" />
      <circle cx="19" cy="50" r="7" fill="#fff" stroke="#66b158" strokeWidth="1.500" />
      <circle cx="58" cy="42" r="1.600" fill="#66b158" />
    </>
  ),
  sublime: (
    <>
      <rect x="7" y="8" width="64" height="64" rx="4" fill="#454545" />
      <path d="M58 16V29L34 37L58 45V54L21 64V52L44 44L21 37V26Z" fill="#f39a36" />
      <path d="M34 37L58 45V54L36 41Z" fill="#dc8424" />
    </>
  ),
  slack: (
    <>
      <circle cx="39" cy="40" r="32.500" fill="#f4f4f4" />
      <g strokeWidth="8" strokeLinecap="round">
        <path d="M34 24V24.500M22 34H34" stroke="#5cc3ec" />
        <path d="M44 24V34M56 34H55.500" stroke="#45b883" />
        <path d="M44 46H56M44 57V56" stroke="#e6b341" />
        <path d="M34 46V57M22 46H22.500" stroke="#d42e5f" />
      </g>
      <Badge n="•" />
    </>
  ),
  github: (
    <>
      <circle cx="39" cy="40" r="33" fill="url(#gPurple)" stroke="#e9e4ee" strokeWidth="2.500" />
      <path d="M22 21L30 25C36 23 44 23 49 25L57 21C59 25 59 28 58 31C65 44 57 53 47 54C49 57 49 60 49 72C43 74 36 74 31 72V65C22 66 20 59 15 55C21 54 23 61 31 59C31 57 32 55 33 54C22 52 15 43 21 31C20 28 20 25 22 21Z" fill="#f1eff3" />
    </>
  ),
  zip: (
    <>
      <path d="M16 9H42L50 16V50L42 59H16V52H38L42 47V20L38 16H16Z" fill="#8d8f92" />
      <path d="M50 12H64V18H50ZM50 48H64V54H50ZM38 62H70V69H38Z" fill="#b4b6b8" />
      <path d="M57 12V70" stroke="#d2d3d5" strokeWidth="7" strokeDasharray="3 1.500" />
      <rect x="8" y="14" width="33" height="39" rx="1" fill="#c77e14" />
      <rect x="10" y="16" width="29" height="17" fill="#f7bb35" />
      <rect x="10" y="35" width="29" height="16" fill="#f7bb35" />
      <path d="M19 22H31V28H19ZM19 40H31V46H19Z" fill="#fff3cf" stroke="#8a6320" strokeWidth="1.200" />
    </>
  ),
  terminal: (
    <>
      <rect x="8.500" y="11.500" width="61" height="56" rx="3" fill="#1f1f1f" stroke="#b4b8bb" strokeWidth="2" />
      <rect x="12" y="15" width="54" height="49" fill="#262626" stroke="#000" strokeWidth="1.500" />
      <path d="M15 20L24 25L15 30M26 32H34" fill="none" stroke="#f0f0f0" strokeWidth="2.400" />
    </>
  ),
  anaconda: (
    <>
      <circle cx="39" cy="40" r="26.500" fill="none" stroke="#61a73a" strokeWidth="11" />
      <path d="M29 8L39 18M22 11L31 22M38 8L24 22M16 17L26 25M31 12L15 28M11 24L22 30M8 31L19 37M22 22L8 38M20 30L7 46M7 40L18 45M18 38L10 54M9 48L21 53M20 48L14 60M13 56L26 60M24 56L20 66" stroke="#161a24" strokeWidth="2.400" />
    </>
  ),
  mongo: (
    <>
      <circle cx="39" cy="40" r="37" fill="#fff" />
      <path d="M39 14C47 24 51 31 51 41C51 50 46 56 40 61L39 66L38 61C31 56 27 50 27 41C27 31 31 24 39 14Z" fill="#55a853" />
      <path d="M39 14C47 24 51 31 51 41C51 50 46 56 40 61L39 66Z" fill="#44924a" />
    </>
  ),
  diamond: (
    <>
      <path d="M34 9Q39 4 44 9L70 35Q74 40 70 45L44 71Q39 76 34 71L8 45Q4 40 8 35Z" fill="url(#gBlue3)" />
      <path d="M32 29L40 37L32 47L22 39Z" fill="#fff" />
      <path d="M38 22H44L58 39L41 57H37V49L46 39L38 29Z" fill="#fff" />
    </>
  ),
  python: (
    <>
      <path d="M18 4H44L62 25V73H14V10H18Z" fill="#f2f2f2" />
      <path d="M44 4V25H62Z" fill="#cfcfcf" />
      <path d="M10 33H66V39H10Z" fill="#dedede" opacity=".5" />
      <path d="M18 9H38M18 13H34M18 17H40M18 21H32M18 27H45M18 31H50M22 37H44M24 41H46M18 45H40M22 49H44M18 53H48M18 57H50" stroke="#bdbdbd" strokeWidth="1.200" />
      <text x="38" y="69.500" textAnchor="middle" fontSize="10" fill="#666" fontFamily="Inter" textLength="37">PYTHON</text>
    </>
  ),
  trash: (
    <>
      <path d="M14 13L20 6L27 10L33 4L40 9L48 4L54 8L62 12L58 19H18Z" fill="#e5e5e5" />
      <path d="M20 12L27 18M34 8L40 17M50 9L46 18M56 12L52 18" stroke="#44484f" strokeWidth="3" />
      <path d="M30 11L34 15" stroke="#3b9bd0" strokeWidth="3" />
      <path d="M47 10L51 13" stroke="#c8643c" strokeWidth="3" />
      <path d="M12 13C18 20 58 20 64 13L58 68C57 74 21 74 20 68Z" fill="url(#gTrash)" stroke="#8b9096" strokeWidth="1" />
      <path d="M30 28C36 24 40 27 46 31M34 50C38 56 43 50 45 44" stroke="#80858a" strokeWidth="3" fill="none" opacity=".6" />
    </>
  ),
};

type Item = { k: string; run?: boolean };
const main: Item[] = [
  { k: "finder", run: true }, { k: "launchpad" }, { k: "safari" }, { k: "contacts" },
  { k: "calendar", run: true }, { k: "notes", run: true }, { k: "reminders", run: true },
  { k: "maps" }, { k: "photos" }, { k: "messages" }, { k: "facetime" }, { k: "pages" },
  { k: "keynote" }, { k: "itunes" }, { k: "appstore" }, { k: "prefs", run: true },
  { k: "chrome", run: true }, { k: "skype" }, { k: "zalo", run: true }, { k: "line" },
  { k: "bear", run: true }, { k: "sublime", run: true }, { k: "slack", run: true },
  { k: "github", run: true }, { k: "zip" },
];
const recent: Item[] = [
  { k: "terminal", run: true }, { k: "anaconda", run: true }, { k: "mongo", run: true }, { k: "diamond" },
];
const files: Item[] = [{ k: "python" }, { k: "trash" }];

function Slots({ items }: { items: Item[] }) {
  return (
    <>
      {items.map((it) => (
        <div key={it.k} className="flex w-[78px] shrink-0 flex-col items-center">
          <svg viewBox="0 0 78 78" className="h-[78px] w-[78px]">{icons[it.k]}</svg>
          {it.run && <span className="mt-[1px] h-2 w-2 rounded-full bg-[#9a9da6]" />}
        </div>
      ))}
    </>
  );
}

function Gradient({ id, a, b }: { id: string; a: string; b: string }) {
  return (
    <linearGradient id={id} x1="0" y1="0" x2="0" y2="1">
      <stop offset="0" stopColor={a} />
      <stop offset="1" stopColor={b} />
    </linearGradient>
  );
}

function Dock() {
  return (
    <div className="ml-[190px] flex h-[96px] w-[2500px] rounded-t-[10px] border-2 border-b-0 border-[#3c3f47] bg-[#181c27] pt-[3px] pl-[4px]">
      <svg className="absolute h-0 w-0">
        <defs>
          <Gradient id="gFinder" a="#52c3f5" b="#3675ee" />
          <Gradient id="gSilver" a="#cddbe0" b="#7b7c7d" />
          <Gradient id="gSafari" a="#3b9df0" b="#2f7de0" />
          <Gradient id="gBlue" a="#6fbcf5" b="#2f86ee" />
          <Gradient id="gBlue2" a="#48b8f7" b="#2a67e8" />
          <Gradient id="gBlue3" a="#54a0f7" b="#3c6cec" />
          <Gradient id="gGreen" a="#7ee87e" b="#42c04d" />
          <Gradient id="gTunes" a="#ee5560" b="#6ec0f5" />
          <Gradient id="gNote" a="#e8505f" b="#6a6fea" />
          <Gradient id="gPrefs" a="#c6d2d9" b="#737475" />
          <Gradient id="gSkype" a="#4bb5ea" b="#2f7fd0" />
          <Gradient id="gPurple" a="#9a4fae" b="#43246f" />
          <Gradient id="gTrash" a="#4b5056" b="#6e7378" />
        </defs>
      </svg>
      <Slots items={main} />
      <span className="mt-[19px] mr-[16px] ml-[18px] h-12 w-[2px] shrink-0 bg-[#44474f]" />
      <Slots items={recent} />
      <span className="mt-[7px] mr-[16px] ml-[16px] h-[72px] w-[2px] shrink-0 bg-[#44474f]" />
      <Slots items={files} />
    </div>
  );
}

export default function App() {
  return (
    <div className="flex h-[1800px] w-[2880px] flex-col overflow-hidden bg-[linear-gradient(to_bottom,#05070d_1704px,#04060c_1720px,#0b1226_1790px)]">
      <MenuBar />
      <div className={`${sans} h-[1658px] shrink-0 overflow-hidden rounded-[10px] bg-[#202124] shadow-[0_10px_30px_rgba(0,0,0,0.8)]`}>
        <div className="h-[2px] bg-[#6a6b6b]" />
        <TabStrip />
        <Toolbar />
        <Page />
        <Downloads />
      </div>
      <Dock />
    </div>
  );
}
